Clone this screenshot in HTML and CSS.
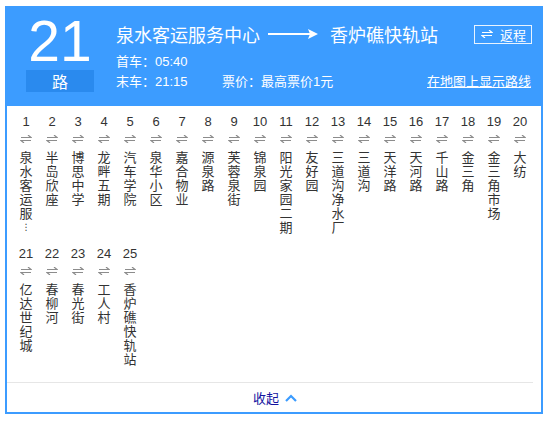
FILE: index.html
```html
<!DOCTYPE html>
<html lang="zh-CN">
<head>
<meta charset="utf-8">
<title>21路</title>
<link rel="stylesheet" href="styles.css">
</head>
<body>
<div class="panel">
  <div class="header">
    <div class="line-no">
      <div class="num">21</div>
      <div class="lu">路</div>
    </div>
    <div class="info">
      <div class="route">
        <span class="stop">泉水客运服务中心</span>
        <svg class="dir-arrow" width="50" height="12" viewBox="0 0 50 12"><line x1="0" y1="6" x2="42" y2="6" stroke="#fff" stroke-width="2"/><polygon points="40,1 50,6 40,11 42,6" fill="#fff"/></svg>
        <span class="stop">香炉礁快轨站</span>
        <span class="back"><svg width="12" height="8" viewBox="0 0 12 8"><path d="M1 2.5H11L8 0M11 5.5H1L4 8" fill="none" stroke="#fff" stroke-width="1.2"/></svg>返程</span>
      </div>
      <div class="time">首车：05:40</div>
      <div class="time row">
        <span class="last">末车：21:15</span>
        <span>票价：最高票价1元</span>
        <a class="maplink" href="#">在地图上显示路线</a>
      </div>
    </div>
  </div>
  <div class="stations">
    <div class="st"><div class="n">1</div><svg class="sw" width="12" height="8" viewBox="0 0 12 8"><path d="M1 2.5H11L8 0M11 5.5H1L4 8" fill="none" stroke="#8c8c8c" stroke-width="1.2"/></svg><div class="name">泉水客运服<span class="ell">⋮</span></div></div>
    <div class="st"><div class="n">2</div><svg class="sw" width="12" height="8" viewBox="0 0 12 8"><path d="M1 2.5H11L8 0M11 5.5H1L4 8" fill="none" stroke="#8c8c8c" stroke-width="1.2"/></svg><div class="name">半岛欣座</div></div>
    <div class="st"><div class="n">3</div><svg class="sw" width="12" height="8" viewBox="0 0 12 8"><path d="M1 2.5H11L8 0M11 5.5H1L4 8" fill="none" stroke="#8c8c8c" stroke-width="1.2"/></svg><div class="name">博思中学</div></div>
    <div class="st"><div class="n">4</div><svg class="sw" width="12" height="8" viewBox="0 0 12 8"><path d="M1 2.5H11L8 0M11 5.5H1L4 8" fill="none" stroke="#8c8c8c" stroke-width="1.2"/></svg><div class="name">龙畔五期</div></div>
    <div class="st"><div class="n">5</div><svg class="sw" width="12" height="8" viewBox="0 0 12 8"><path d="M1 2.5H11L8 0M11 5.5H1L4 8" fill="none" stroke="#8c8c8c" stroke-width="1.2"/></svg><div class="name">汽车学院</div></div>
    <div class="st"><div class="n">6</div><svg class="sw" width="12" height="8" viewBox="0 0 12 8"><path d="M1 2.5H11L8 0M11 5.5H1L4 8" fill="none" stroke="#8c8c8c" stroke-width="1.2"/></svg><div class="name">泉华小区</div></div>
    <div class="st"><div class="n">7</div><svg class="sw" width="12" height="8" viewBox="0 0 12 8"><path d="M1 2.5H11L8 0M11 5.5H1L4 8" fill="none" stroke="#8c8c8c" stroke-width="1.2"/></svg><div class="name">嘉合物业</div></div>
    <div class="st"><div class="n">8</div><svg class="sw" width="12" height="8" viewBox="0 0 12 8"><path d="M1 2.5H11L8 0M11 5.5H1L4 8" fill="none" stroke="#8c8c8c" stroke-width="1.2"/></svg><div class="name">源泉路</div></div>
    <div class="st"><div class="n">9</div><svg class="sw" width="12" height="8" viewBox="0 0 12 8"><path d="M1 2.5H11L8 0M11 5.5H1L4 8" fill="none" stroke="#8c8c8c" stroke-width="1.2"/></svg><div class="name">芙蓉泉街</div></div>
    <div class="st"><div class="n">10</div><svg class="sw" width="12" height="8" viewBox="0 0 12 8"><path d="M1 2.5H11L8 0M11 5.5H1L4 8" fill="none" stroke="#8c8c8c" stroke-width="1.2"/></svg><div class="name">锦泉园</div></div>
    <div class="st"><div class="n">11</div><svg class="sw" width="12" height="8" viewBox="0 0 12 8"><path d="M1 2.5H11L8 0M11 5.5H1L4 8" fill="none" stroke="#8c8c8c" stroke-width="1.2"/></svg><div class="name">阳光家园二期</div></div>
    <div class="st"><div class="n">12</div><svg class="sw" width="12" height="8" viewBox="0 0 12 8"><path d="M1 2.5H11L8 0M11 5.5H1L4 8" fill="none" stroke="#8c8c8c" stroke-width="1.2"/></svg><div class="name">友好园</div></div>
    <div class="st"><div class="n">13</div><svg class="sw" width="12" height="8" viewBox="0 0 12 8"><path d="M1 2.5H11L8 0M11 5.5H1L4 8" fill="none" stroke="#8c8c8c" stroke-width="1.2"/></svg><div class="name">三道沟净水厂</div></div>
    <div class="st"><div class="n">14</div><svg class="sw" width="12" height="8" viewBox="0 0 12 8"><path d="M1 2.5H11L8 0M11 5.5H1L4 8" fill="none" stroke="#8c8c8c" stroke-width="1.2"/></svg><div class="name">三道沟</div></div>
    <div class="st"><div class="n">15</div><svg class="sw" width="12" height="8" viewBox="0 0 12 8"><path d="M1 2.5H11L8 0M11 5.5H1L4 8" fill="none" stroke="#8c8c8c" stroke-width="1.2"/></svg><div class="name">天洋路</div></div>
    <div class="st"><div class="n">16</div><svg class="sw" width="12" height="8" viewBox="0 0 12 8"><path d="M1 2.5H11L8 0M11 5.5H1L4 8" fill="none" stroke="#8c8c8c" stroke-width="1.2"/></svg><div class="name">天河路</div></div>
    <div class="st"><div class="n">17</div><svg class="sw" width="12" height="8" viewBox="0 0 12 8"><path d="M1 2.5H11L8 0M11 5.5H1L4 8" fill="none" stroke="#8c8c8c" stroke-width="1.2"/></svg><div class="name">千山路</div></div>
    <div class="st"><div class="n">18</div><svg class="sw" width="12" height="8" viewBox="0 0 12 8"><path d="M1 2.5H11L8 0M11 5.5H1L4 8" fill="none" stroke="#8c8c8c" stroke-width="1.2"/></svg><div class="name">金三角</div></div>
    <div class="st"><div class="n">19</div><svg class="sw" width="12" height="8" viewBox="0 0 12 8"><path d="M1 2.5H11L8 0M11 5.5H1L4 8" fill="none" stroke="#8c8c8c" stroke-width="1.2"/></svg><div class="name">金三角市场</div></div>
    <div class="st"><div class="n">20</div><svg class="sw" width="12" height="8" viewBox="0 0 12 8"><path d="M1 2.5H11L8 0M11 5.5H1L4 8" fill="none" stroke="#8c8c8c" stroke-width="1.2"/></svg><div class="name">大纺</div></div>
    <div class="st"><div class="n">21</div><svg class="sw" width="12" height="8" viewBox="0 0 12 8"><path d="M1 2.5H11L8 0M11 5.5H1L4 8" fill="none" stroke="#8c8c8c" stroke-width="1.2"/></svg><div class="name">亿达世纪城</div></div>
    <div class="st"><div class="n">22</div><svg class="sw" width="12" height="8" viewBox="0 0 12 8"><path d="M1 2.5H11L8 0M11 5.5H1L4 8" fill="none" stroke="#8c8c8c" stroke-width="1.2"/></svg><div class="name">春柳河</div></div>
    <div class="st"><div class="n">23</div><svg class="sw" width="12" height="8" viewBox="0 0 12 8"><path d="M1 2.5H11L8 0M11 5.5H1L4 8" fill="none" stroke="#8c8c8c" stroke-width="1.2"/></svg><div class="name">春光街</div></div>
    <div class="st"><div class="n">24</div><svg class="sw" width="12" height="8" viewBox="0 0 12 8"><path d="M1 2.5H11L8 0M11 5.5H1L4 8" fill="none" stroke="#8c8c8c" stroke-width="1.2"/></svg><div class="name">工人村</div></div>
    <div class="st"><div class="n">25</div><svg class="sw" width="12" height="8" viewBox="0 0 12 8"><path d="M1 2.5H11L8 0M11 5.5H1L4 8" fill="none" stroke="#8c8c8c" stroke-width="1.2"/></svg><div class="name">香炉礁快轨站</div></div>
  </div>
  <div class="footer">
    <span class="fold">收起<svg width="12" height="8" viewBox="0 0 12 8"><path d="M1 7L6 2L11 7" fill="none" stroke="#3c9cff" stroke-width="2.2"/></svg></span>
  </div>
</div>
</body>
</html>
```
FILE: styles.css
```css
html, body {
  margin: 0;
  padding: 0;
  background: #fff;
}
body {
  font-family: "Liberation Sans", "Noto Sans CJK SC", sans-serif;
  color: #333;
}
.panel {
  margin: 6px 0 0 5px;
  width: 538px;
  height: 408px;
  box-sizing: border-box;
  border: 2px solid #3c9cff;
  display: flex;
  flex-direction: column;
}
.header {
  background: #3c9cff;
  height: 98px;
  display: flex;
  color: #fff;
}
.line-no {
  margin-left: 19px;
  width: 68px;
  padding-top: 5px;
}
.line-no .num {
  font-size: 57px;
  line-height: 57px;
  height: 57px;
  text-align: center;
}
.line-no .lu {
  height: 22px;
  line-height: 22px;
  background: #2a8aee;
  text-align: center;
  font-size: 16px;
  font-family: "Noto Sans CJK SC", sans-serif;
}
.info {
  margin-left: 22px;
  flex: 1;
  padding-right: 9px;
}
.route {
  margin-top: 13px;
  height: 26px;
  display: flex;
  align-items: center;
}
.stop {
  font-size: 18px;
  font-family: "Noto Sans CJK SC", sans-serif;
  line-height: 26px;
}
.dir-arrow {
  margin: 0 12px 0 8px;
}
.back {
  margin-left: auto;
  width: 58px;
  height: 19px;
  box-sizing: border-box;
  border: 1px solid #e8f3ff;
  display: flex;
  align-items: center;
  padding-left: 6px;
  font-size: 13px;
  font-family: "Noto Sans CJK SC", sans-serif;
}
.back svg {
  margin-right: 7px;
}
.time {
  font-size: 13px;
  line-height: 20px;
}
.route + .time {
  margin-top: 5px;
}
.row {
  display: flex;
}
.last {
  width: 106px;
}
.maplink {
  margin-left: auto;
  margin-right: 1px;
  color: #fff;
  text-decoration: underline;
}
.stations {
  display: grid;
  grid-template-columns: repeat(20, 26px);
  row-gap: 12px;
  align-items: start;
  padding: 8px 0 16px 6px;
  border-bottom: 1px solid #e6e6e6;
  margin: 0 8px 0 0;
}
.st {
  display: flex;
  flex-direction: column;
  align-items: center;
}
.st .n {
  font-size: 13px;
  line-height: 16px;
  height: 16px;
  color: #333;
}
.sw {
  display: block;
  margin: 5px 0 7px;
}
.name {
  width: 14px;
  font-size: 13px;
  line-height: 14px;
  font-family: "Noto Sans CJK SC", sans-serif;
  word-break: break-all;
  text-align: center;
  color: #333;
}
.ell {
  display: block;
  font-family: "DejaVu Sans", sans-serif;
  font-size: 9px;
  line-height: 14px;
  height: 14px;
}
.footer {
  flex: 1;
  display: flex;
  align-items: center;
  justify-content: center;
}
.fold {
  display: flex;
  align-items: center;
  font-size: 13px;
  font-family: "Noto Sans CJK SC", sans-serif;
  color: #1414a0;
  margin-left: 2px;
}
.fold svg {
  margin-left: 6px;
}
```
